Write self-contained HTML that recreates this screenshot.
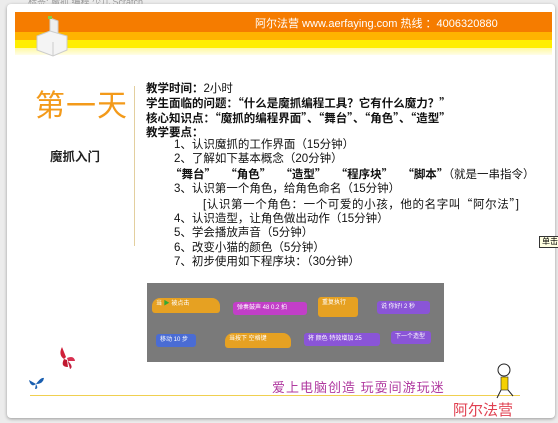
<!DOCTYPE html>
<html><head><meta charset="utf-8"><style>
body{margin:0;width:558px;height:423px;background:#ececec;position:relative;overflow:hidden;font-family:"Liberation Sans","Noto Sans CJK SC",sans-serif;}
.a{position:absolute;white-space:nowrap;}
#slide{position:absolute;left:7px;top:4px;width:548px;height:414px;background:#fff;border-radius:4px;box-shadow:0 1px 3px #999;}
.t{font-size:11.5px;color:#111;line-height:14px;}
.b{font-weight:bold;}
.q{font-family:"Noto Sans CJK SC",sans-serif;}
.blk{position:absolute;height:13px;border-radius:3px;font-size:6px;color:#fff;line-height:13px;padding:0 4px;}
</style></head><body>
<div class="a" style="left:28px;top:-5px;font-size:9px;color:#999">标签: 魔抓 编程 少儿 Scratch</div>
<div id="slide"></div>
<div class="a" style="left:15px;top:12px;width:537px;height:20px;background:#f57c00"></div>
<div class="a" style="left:15px;top:32px;width:537px;height:8px;background:#ffb300"></div>
<div class="a" style="left:15px;top:40px;width:537px;height:8px;background:#ffee00"></div>
<div class="a" style="left:15px;top:48px;width:537px;height:7px;background:linear-gradient(#fff9a0,#fffde8)"></div>
<div class="a" style="left:255px;top:15px;font-size:11px;color:#fff">阿尔法营 www.aerfaying.com 热线 ：4006320880</div>
<svg class="a" style="left:33px;top:14px" width="38" height="44"><polygon points="17,4 25,7 25,20 17,17" fill="#eee" stroke="#ccc"/><polygon points="4,22 17,17 34,22 34,36 20,42 4,36" fill="#f4f4f4" stroke="#ccc"/><line x1="20" y1="28" x2="20" y2="42" stroke="#ccc"/><rect x="15" y="2" width="4" height="3" fill="#8c4"/></svg>
<div class="a" style="left:35px;top:81px;font-size:30px;color:#f39a1a;letter-spacing:1px">第一天</div>
<div class="a b" style="left:50px;top:146px;font-size:12.5px;color:#222">魔抓入门</div>
<div class="a" style="left:134px;top:86px;width:1px;height:160px;background:#e3cf9e"></div>
<div class="a t" style="left:146px;top:82px">
<div><span class="b">教学时间：</span>2小时</div>
<div class="b">学生面临的问题：<span class="q">“</span>什么是魔抓编程工具？它有什么魔力？<span class="q">”</span></div>
<div class="b">核心知识点：<span class="q">“</span>魔抓的编程界面<span class="q">”</span>、<span class="q">“</span>舞台<span class="q">”</span>、<span class="q">“</span>角色<span class="q">”</span>、<span class="q">“</span>造型<span class="q">”</span></div>
<div class="b">教学要点：</div>
</div>
<div class="a t" style="left:174px;top:138px;line-height:14.4px">
<div>1、认识魔抓的工作界面（15分钟）</div>
<div>2、了解如下基本概念（20分钟）</div>
<div style="margin-left:-4px;word-spacing:6px"><b><span class="q">“</span>舞台<span class="q">”</span> <span class="q">“</span>角色<span class="q">”</span> <span class="q">“</span>造型<span class="q">”</span> <span class="q">“</span>程序块<span class="q">”</span> <span class="q">“</span>脚本<span class="q">”</span></b><span style="word-spacing:0">（就是一串指令）</span></div>
<div>3、认识第一个角色，给角色命名（15分钟）</div>
<div style="margin-left:29px;letter-spacing:.6px">[认识第一个角色：一个可爱的小孩，他的名字叫<span class="q">“</span>阿尔法<span class="q">”</span>]</div>
<div>4、认识造型，让角色做出动作（15分钟）</div>
<div>5、学会播放声音（5分钟）</div>
<div>6、改变小猫的颜色（5分钟）</div>
<div>7、初步使用如下程序块：（30分钟）</div>
</div>
<div class="a" style="left:539px;top:236px;font-size:8px;border:1px solid #333;background:#ffffe1;padding:0 2px;line-height:10px">单击</div>
<div class="a" style="left:147px;top:283px;width:297px;height:79px;background:#7a7a7a"></div>
<div class="blk" style="left:152px;top:298px;width:60px;height:15px;background:#e6a122;border-radius:8px 8px 3px 3px">当 <span style="color:#3a3">▶</span> 被点击</div>
<div class="blk" style="left:233px;top:302px;width:66px;background:#c23fc8">弹奏鼓声 48 0.2 拍</div>
<div class="blk" style="left:318px;top:297px;width:32px;height:20px;background:#e6a122">重复执行</div>
<div class="blk" style="left:377px;top:301px;width:45px;background:#8a55d7">说 你好! 2 秒</div>
<div class="blk" style="left:156px;top:334px;width:32px;background:#4a6cd4">移动 10 步</div>
<div class="blk" style="left:225px;top:333px;width:58px;height:15px;background:#e6a122;border-radius:8px 8px 3px 3px">当按下 空格键</div>
<div class="blk" style="left:304px;top:333px;width:68px;background:#8a55d7">将 颜色 特效增加 25</div>
<div class="blk" style="left:391px;top:331px;width:32px;background:#8a55d7">下一个造型</div>
<svg class="a" style="left:56px;top:345px" width="22" height="26"><path d="M6 2 Q2 10 8 14 L10 12 Z" fill="#d0203a"/><path d="M8 14 Q4 22 12 22 L11 15 Z" fill="#c01830"/><path d="M11 13 Q18 10 19 16 L12 16 Z" fill="#d83050"/><path d="M12 16 Q18 22 14 24 L12 17 Z" fill="#c02040"/></svg>
<svg class="a" style="left:27px;top:376px" width="20" height="14"><path d="M2 4 Q4 12 9 8 Z M9 8 Q14 1 17 2 Q16 8 9 8 Z M9 8 Q12 13 8 13 Z" fill="#1a5fb0"/></svg>
<div class="a" style="left:30px;top:395px;width:490px;height:1px;background:#f0d050"></div>
<div class="a" style="left:272px;top:377px;font-size:13px;color:#b03aa0;letter-spacing:1px">爱上电脑创造 玩耍间游玩迷</div>
<svg class="a" style="left:493px;top:362px" width="30" height="40"><circle cx="11" cy="8" r="6" fill="#fff" stroke="#222"/><rect x="8" y="15" width="7" height="13" fill="#f5d000" stroke="#222" stroke-width=".6"/><path d="M8 28 L4 36 M15 28 L20 34" stroke="#222"/></svg>
<div class="a" style="left:453px;top:399px;font-size:15px;color:#e04050">阿尔法营</div>
</body></html>
